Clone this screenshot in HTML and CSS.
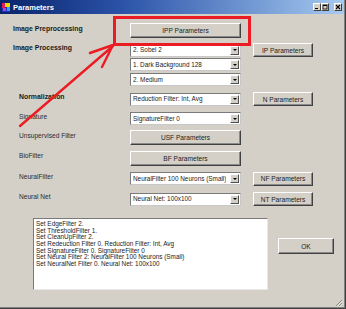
FILE: index.html
```html
<!DOCTYPE html>
<html>
<head>
<meta charset="utf-8">
<link rel="stylesheet" href="styles.css">
</head>
<body>
<div class="window">
  <div class="titlebar">
    <svg class="app-icon" width="8" height="9" viewBox="0 0 8 9">
      <rect x="0" y="0" width="8" height="9" fill="#2030c0"/>
      <rect x="0" y="0" width="3" height="5" fill="#e02060"/>
      <rect x="3" y="0" width="5" height="4" fill="#f0d800"/>
      <rect x="1" y="5" width="3" height="3" fill="#c040c0"/>
      <rect x="5" y="4" width="3" height="4" fill="#30a0f0"/>
    </svg>
    <span class="title">Parameters</span>
    <div class="title-buttons">
      <span class="tbtn"><svg width="6" height="6" viewBox="0 0 6 6"><rect x="1" y="4" width="3" height="1" fill="#000"/></svg></span>
      <span class="tbtn"><svg width="6" height="6" viewBox="0 0 6 6"><rect x="1" y="1" width="4" height="4" fill="none" stroke="#000" stroke-width="0.8"/><rect x="1" y="1" width="4" height="1" fill="#000"/></svg></span>
      <span class="tbtn close"><svg width="6" height="6" viewBox="0 0 6 6"><path d="M1 1 L5 5 M5 1 L1 5" stroke="#000" stroke-width="1.1"/></svg></span>
    </div>
  </div>

  <div class="form">
    <div class="row mt-9 h-15">
      <span class="label bold">Image Preprocessing</span>
      <div class="btn main-btn">IPP Parameters</div>
    </div>
    <div class="row mt-5 h-14">
      <span class="label bold">Image Processing</span>
      <div class="combo"><span class="combo-text">2. Sobel 2</span><span class="drop"><i class="arrow"></i></span></div>
      <div class="btn side-btn">IP Parameters</div>
    </div>
    <div class="row mt-1 h-13">
      <span class="label"></span>
      <div class="combo"><span class="combo-text">1. Dark Background 128</span><span class="drop"><i class="arrow"></i></span></div>
    </div>
    <div class="row mt-2 h-13">
      <span class="label"></span>
      <div class="combo"><span class="combo-text">2. Medium</span><span class="drop"><i class="arrow"></i></span></div>
    </div>
    <div class="row mt-6 h-14">
      <span class="label bold indent">Normalization</span>
      <div class="combo"><span class="combo-text">Reduction Filter: Int, Avg</span><span class="drop"><i class="arrow"></i></span></div>
      <div class="btn side-btn">N Parameters</div>
    </div>
    <div class="row mt-6 h-13">
      <span class="label indent">Signature</span>
      <div class="combo"><span class="combo-text">SignatureFilter 0</span><span class="drop"><i class="arrow"></i></span></div>
    </div>
    <div class="row mt-5 h-15">
      <span class="label indent">Unsupervised Filter</span>
      <div class="btn main-btn">USF Parameters</div>
    </div>
    <div class="row mt-6 h-14">
      <span class="label indent">BioFilter</span>
      <div class="btn main-btn">BF Parameters</div>
    </div>
    <div class="row mt-7 h-13">
      <span class="label indent">NeuralFilter</span>
      <div class="combo"><span class="combo-text">NeuralFilter 100 Neurons (Small)</span><span class="drop"><i class="arrow"></i></span></div>
      <div class="btn side-btn">NF Parameters</div>
    </div>
    <div class="row mt-7 h-14">
      <span class="label indent">Neural Net</span>
      <div class="combo"><span class="combo-text">Neural Net: 100x100</span><span class="drop"><i class="arrow"></i></span></div>
      <div class="btn side-btn">NT Parameters</div>
    </div>

    <div class="bottom">
      <div class="log">Set EdgeFilter 2.
Set ThresholdFilter 1.
Set CleanUpFilter 2.
Set Redeuction Filter 0. Reduction Filter: Int, Avg
Set SignatureFilter 0. SignatureFilter 0
Set Neural Filter 2: NeuralFilter 100 Neurons (Small)
Set NeuralNet Filter 0. Neural Net: 100x100</div>
      <div class="btn ok-btn">OK</div>
    </div>
  </div>

  <div class="footer">
    <svg class="grip" width="8" height="8" viewBox="0 0 8 8">
      <path d="M7 1 L1 7 M7 4 L4 7 M7 6.5 L6.5 7" stroke="#808080" stroke-width="0.9"/>
      <path d="M7.8 1.8 L1.8 7.8 M7.8 4.8 L4.8 7.8" stroke="#ffffff" stroke-width="0.6"/>
    </svg>
  </div>

  <svg class="annotation" width="346" height="309" viewBox="0 0 346 309">
    <rect x="114.5" y="17.5" width="135" height="27" fill="none" stroke="#ec1c24" stroke-width="3"/>
    <path d="M20 126 L113 46" stroke="#ec1c24" stroke-width="2.4" fill="none" stroke-linecap="round"/>
    <path d="M113 45 L90 53 M113 45 L102 67" stroke="#ec1c24" stroke-width="2.4" fill="none" stroke-linecap="round"/>
  </svg>
</div>
</body>
</html>
```

FILE: styles.css
```css
html, body {
  margin: 0;
  padding: 0;
}

body {
  width: 346px;
  height: 309px;
  overflow: hidden;
  background: #d4d0c8;
  font-family: "Liberation Sans", Arial, sans-serif;
  color: #1e1e1e;
}

.window {
  position: relative;
  width: 346px;
  height: 309px;
  box-sizing: border-box;
  background: #d4d0c8;
  border-right: 1px solid #404040;
  border-bottom: 1px solid #404040;
  box-shadow: inset -1px -1px 0 #808080;
  display: flex;
  flex-direction: column;
}

/* Title bar */
.titlebar {
  height: 14px;
  margin-right: 1px;
  flex: none;
  display: flex;
  align-items: center;
  padding: 0 2px 0 2px;
  background: linear-gradient(to right, #0a246a 0%, #2a52a8 35%, #a6caf0 100%);
}

.app-icon {
  display: block;
  flex: none;
}

.title {
  margin-left: 3px;
  color: #ffffff;
  font-weight: bold;
  font-size: 7.5px;
  line-height: 9px;
}

.title-buttons {
  margin-left: auto;
  display: flex;
  align-items: center;
}

.tbtn {
  width: 8px;
  height: 8px;
  box-sizing: border-box;
  background: #d4d0c8;
  border: 1px solid;
  border-color: #ffffff #404040 #404040 #ffffff;
  display: flex;
  align-items: center;
  justify-content: center;
}

.tbtn svg {
  display: block;
}

.tbtn.close {
  margin-left: 5px;
}

/* Form */
.form {
  display: flex;
  flex-direction: column;
}

.row {
  display: flex;
  align-items: center;
  padding-left: 13px;
}

.h-13 { height: 13px; }
.h-14 { height: 14px; }
.h-15 { height: 15px; }

.mt-1 { margin-top: 1px; }
.mt-2 { margin-top: 2px; }
.mt-5 { margin-top: 5px; }
.mt-6 { margin-top: 6px; }
.mt-7 { margin-top: 7px; }
.mt-9 { margin-top: 9px; }

.label {
  width: 117px;
  flex: none;
  box-sizing: border-box;
  font-size: 6.6px;
  line-height: 8px;
  margin-bottom: 4px;
  color: #2a2a2a;
  white-space: nowrap;
}

.label.bold {
  font-weight: bold;
  font-size: 6.9px;
  color: #1a1a1a;
}

.label.indent {
  padding-left: 6px;
}

.btn {
  box-sizing: border-box;
  background: #d4d0c8;
  border: 1px solid;
  border-color: #ffffff #404040 #404040 #ffffff;
  box-shadow: inset -1px -1px 0 #8a8a8a;
  display: flex;
  align-items: center;
  justify-content: center;
  font-size: 6.6px;
  color: #222;
  white-space: nowrap;
  flex: none;
}

.main-btn {
  width: 111px;
  height: 15px;
}

.side-btn {
  width: 60px;
  height: 14px;
  margin-left: 12px;
}

.combo {
  width: 111px;
  height: 13px;
  flex: none;
  box-sizing: border-box;
  background: #ffffff;
  border: 1px solid;
  border-color: #7a7a7a #c8c8c8 #c8c8c8 #7a7a7a;
  display: flex;
  align-items: center;
  padding: 1px;
}

.combo-text {
  font-size: 6.4px;
  line-height: 8px;
  color: #222;
  white-space: nowrap;
  overflow: hidden;
  padding-left: 1px;
}

.drop {
  margin-left: auto;
  width: 9px;
  height: 9px;
  flex: none;
  box-sizing: border-box;
  background: #d4d0c8;
  border: 1px solid;
  border-color: #ffffff #505050 #505050 #ffffff;
  display: flex;
  align-items: center;
  justify-content: center;
}

.arrow {
  display: block;
  width: 0;
  height: 0;
  border-left: 2px solid transparent;
  border-right: 2px solid transparent;
  border-top: 2px solid #000;
}

/* Bottom area */
.bottom {
  display: flex;
  align-items: flex-start;
  margin-top: 12px;
  padding-left: 33px;
}

.log {
  width: 235px;
  height: 72px;
  box-sizing: border-box;
  background: #ffffff;
  border: 1px solid;
  border-color: #7a7a7a #e8e8e8 #e8e8e8 #7a7a7a;
  padding: 2px 2px;
  font-size: 6.4px;
  line-height: 6.67px;
  color: #222;
  white-space: pre-line;
}

.ok-btn {
  width: 56px;
  height: 16px;
  margin-left: 10px;
  margin-top: 20px;
}

.footer {
  margin-top: auto;
  display: flex;
  justify-content: flex-end;
  padding: 0 2px 1px 0;
}

.grip {
  display: block;
}

.annotation {
  position: absolute;
  left: 0;
  top: 0;
  pointer-events: none;
}
```
